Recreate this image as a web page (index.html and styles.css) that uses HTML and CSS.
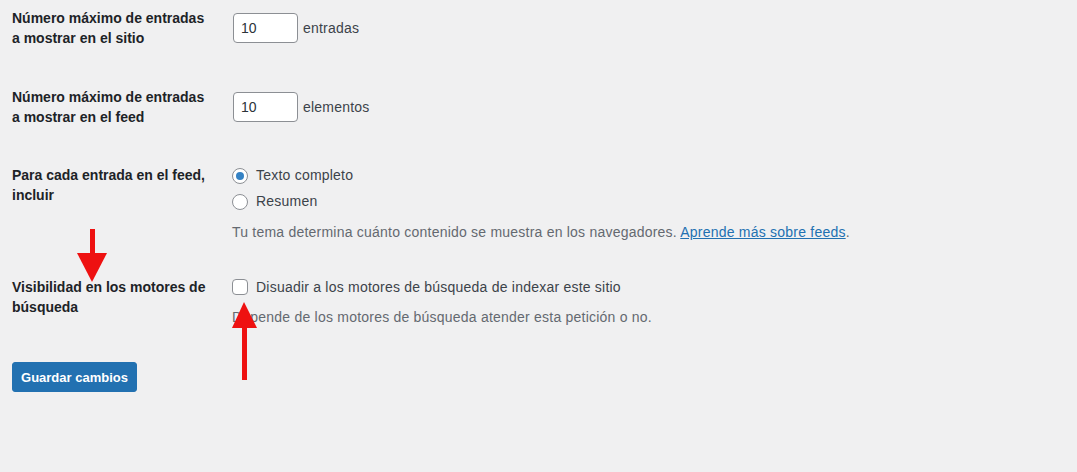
FILE: index.html
```html
<!DOCTYPE html>
<html lang="es">
<head>
<meta charset="utf-8">
<title>Ajustes de lectura</title>
<link rel="stylesheet" href="styles.css">
</head>
<body>
<div class="wrap">
  <form class="form">
    <div class="row row-1">
      <div class="label">Número máximo de entradas<br>a mostrar en el sitio</div>
      <div class="field">
        <div class="inline"><input class="num" type="text" value="10"><span class="unit">entradas</span></div>
      </div>
    </div>
    <div class="row row-2">
      <div class="label">Número máximo de entradas<br>a mostrar en el feed</div>
      <div class="field">
        <div class="inline"><input class="num" type="text" value="10"><span class="unit">elementos</span></div>
      </div>
    </div>
    <div class="row row-3">
      <div class="label">Para cada entrada en el feed,<br>incluir</div>
      <div class="field">
        <label class="opt"><span class="radio checked"></span>Texto completo</label>
        <label class="opt opt-2"><span class="radio"></span>Resumen</label>
        <p class="desc">Tu tema determina cuánto contenido se muestra en los navegadores. <a href="#">Aprende más sobre feeds</a>.</p>
      </div>
    </div>
    <div class="row row-4">
      <div class="label">Visibilidad en los motores de<br>búsqueda</div>
      <div class="field">
        <label class="opt"><span class="check"></span>Disuadir a los motores de búsqueda de indexar este sitio</label>
        <p class="desc desc-2">Depende de los motores de búsqueda atender esta petición o no.</p>
      </div>
    </div>
    <div class="submit"><button type="button" class="btn">Guardar cambios</button></div>
  </form>
  <svg class="arrow arrow-down" width="40" height="60" viewBox="0 0 40 60">
    <rect x="14" y="0" width="5" height="26" fill="#ee1111"/>
    <polygon points="1,24 31,24 16,53" fill="#ee1111"/>
  </svg>
  <svg class="arrow arrow-up" width="40" height="90" viewBox="0 0 40 90">
    <polygon points="14,0 2,26 27,26" fill="#ee1111"/>
    <rect x="12" y="24" width="5" height="54" fill="#ee1111"/>
  </svg>
</div>
</body>
</html>
```

FILE: styles.css
```css
html, body {
  margin: 0;
  padding: 0;
  background: #f0f0f1;
}
body {
  font-family: "Liberation Sans", Arial, sans-serif;
  font-size: 14px;
  color: #3c434a;
  width: 1077px;
  height: 472px;
  overflow: hidden;
}
.wrap {
  position: relative;
  padding-left: 12px;
}
.row {
  display: flex;
  padding-top: 8px;
}
.row-1 { padding-bottom: 31px; }
.row-2 { padding-bottom: 30px; }
.row-3 { padding-bottom: 27px; }
.label {
  width: 220px;
  flex: none;
  font-weight: bold;
  color: #1d2327;
  line-height: 20px;
}
.field {
  line-height: 20px;
  letter-spacing: 0.22px;
}
.inline {
  display: flex;
  align-items: center;
  margin-top: 5px;
}
.num {
  box-sizing: border-box;
  width: 65px;
  height: 30px;
  border: 1px solid #8c8f94;
  border-radius: 4px;
  background: #fff;
  padding: 0 7px;
  font-family: inherit;
  font-size: 14px;
  color: #2c3338;
  margin: 0 5px 0 1px;
}
.unit { color: #3c434a; }
.opt {
  display: flex;
  align-items: center;
  height: 20px;
}
.opt-2 { margin-top: 6px; }
.radio, .check {
  box-sizing: border-box;
  width: 16px;
  height: 16px;
  border: 1px solid #8c8f94;
  background: #fff;
  margin-right: 8px;
  flex: none;
  position: relative;
  top: 1px;
}
.radio { border-radius: 50%; }
.radio.checked::after {
  content: "";
  position: absolute;
  left: 3px;
  top: 3px;
  width: 8px;
  height: 8px;
  border-radius: 50%;
  background: #3582c4;
}
.check { border-radius: 4px; top: 0; }
.desc {
  margin: 11px 0 0;
  color: #646970;
}
.desc-2 { margin-top: 10px; }
.desc a {
  color: #2271b1;
  text-decoration: underline;
}
.submit {
  padding-top: 35px;
}
.btn {
  box-sizing: border-box;
  height: 30px;
  width: 125px;
  padding: 0;
  border: 1px solid #2271b1;
  border-radius: 3px;
  background: #2271b1;
  color: #fff;
  font-family: inherit;
  font-size: 13px;
  font-weight: bold;
  white-space: nowrap;
  text-align: center;
}
.arrow {
  position: absolute;
}
.arrow-down {
  left: 76px;
  top: 229px;
}
.arrow-up {
  left: 230px;
  top: 302px;
}
```
